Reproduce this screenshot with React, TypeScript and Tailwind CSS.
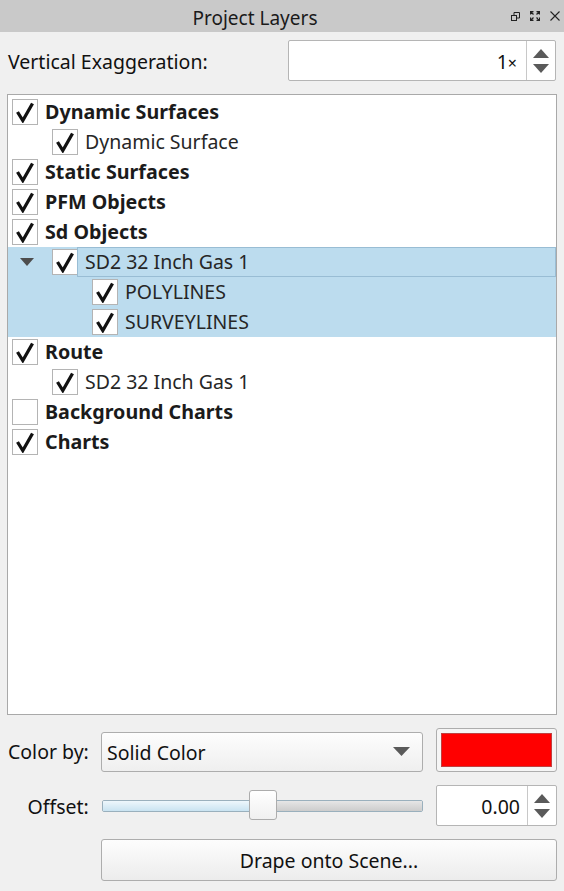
import React from "react";

type Layer = {
  label: string;
  level: number;
  bold?: boolean;
  checked: boolean;
  expander?: boolean;
  selected?: boolean;
  current?: boolean;
};

const layers: Layer[] = [
  { label: "Dynamic Surfaces", level: 0, bold: true, checked: true },
  { label: "Dynamic Surface", level: 1, checked: true },
  { label: "Static Surfaces", level: 0, bold: true, checked: true },
  { label: "PFM Objects", level: 0, bold: true, checked: true },
  { label: "Sd Objects", level: 0, bold: true, checked: true },
  { label: "SD2 32 Inch Gas 1", level: 1, checked: true, expander: true, selected: true, current: true },
  { label: "POLYLINES", level: 2, checked: true, selected: true },
  { label: "SURVEYLINES", level: 2, checked: true, selected: true },
  { label: "Route", level: 0, bold: true, checked: true },
  { label: "SD2 32 Inch Gas 1", level: 1, checked: true },
  { label: "Background Charts", level: 0, bold: true, checked: false },
  { label: "Charts", level: 0, bold: true, checked: true },
];

const font = { fontFamily: '"Noto Sans", "Open Sans", sans-serif' };

const Check = ({ checked }: { checked: boolean }) => (
  <div className="w-[26px] h-[26px] shrink-0 bg-white border border-[#b4b4b4] flex items-center justify-center">
    {checked && (
      <svg width="22" height="22" viewBox="0 0 22 22">
        <path d="M3.5 11 L8.8 19.5 L18.5 2.5" fill="none" stroke="#111" strokeWidth="3.3" strokeLinejoin="miter" />
      </svg>
    )}
  </div>
);

const SpinArrows = () => (
  <div className="w-[29px] h-full border-l border-[#c8c8c8] flex flex-col items-center justify-center gap-[6px]">
    <svg width="18" height="10" viewBox="0 0 18 10">
      <path d="M1 10 L9 1 L17 10 Z" fill="#5a5a5a" />
    </svg>
    <svg width="18" height="10" viewBox="0 0 18 10">
      <path d="M1 0 L9 9 L17 0 Z" fill="#5a5a5a" />
    </svg>
  </div>
);

const TitleIcons = () => (
  <div className="w-[54px] flex items-center gap-[10px] pl-[1px]">
    <svg width="9" height="9" viewBox="0 0 9 9">
      <rect x="0.5" y="3.5" width="5" height="5" fill="none" stroke="#222" />
      <path d="M3 3.5 V0.5 H8.5 V6 H5.5" fill="none" stroke="#222" />
    </svg>
    <svg width="10" height="10" viewBox="0 0 10 10">
      <path d="M0.5 3.5 V0.5 H3.5 M0.5 0.5 L3.5 3.5 M6.5 0.5 H9.5 V3.5 M9.5 0.5 L6.5 3.5 M0.5 6.5 V9.5 H3.5 M0.5 9.5 L3.5 6.5 M6.5 9.5 H9.5 V6.5 M9.5 9.5 L6.5 6.5" fill="none" stroke="#222" strokeWidth="1.3" />
    </svg>
    <svg width="10" height="10" viewBox="0 0 10 10">
      <path d="M0.5 0.5 L9.5 9.5 M9.5 0.5 L0.5 9.5" fill="none" stroke="#222" strokeWidth="1.1" />
    </svg>
  </div>
);

const LayerRow = ({ layer }: { layer: Layer }) => (
  <div className={`h-[30px] flex items-center ${layer.selected ? "bg-[#bcdcee]" : ""}`}>
    {layer.level === 0 && <div className="w-[4px] shrink-0" />}
    {layer.level === 1 && (
      <div className="w-[44px] shrink-0 flex items-center justify-center">
        {layer.expander && (
          <svg width="14" height="8" viewBox="0 0 14 8" className="mr-[6px]">
            <path d="M0 0 L14 0 L7 8 Z" fill="#4d4d4d" />
          </svg>
        )}
      </div>
    )}
    {layer.level === 2 && <div className="w-[84px] shrink-0" />}
    <Check checked={layer.checked} />
    <div
      className={`flex-1 h-full flex items-center pl-[7px] ${
        layer.current ? "border border-[#99bdd4] -ml-[1px] h-[29px]" : ""
      } ${layer.bold ? "font-bold text-[#1b1b1b]" : "text-[#262626]"}`}
    >
      <span className={`${layer.bold ? "text-[19.7px]" : "text-[19.5px]"} leading-none whitespace-nowrap`}>
        {layer.label}
      </span>
    </div>
  </div>
);

export default function App() {
  return (
    <div className="w-[564px] h-[891px] bg-[#f0f0f0] flex flex-col text-[#111]" style={font}>
      <div className="h-[32px] bg-[#c9c9c9] flex items-center">
        <div className="flex-1 text-center text-[19px] leading-none pt-[4px] text-[#1a1a1a]">Project Layers</div>
        <TitleIcons />
      </div>

      <div className="pt-[8px] pl-[8px] pr-[8px] flex items-center justify-between">
        <span className="text-[19.5px] pt-[2px]">Vertical Exaggeration:</span>
        <div className="w-[268px] h-[41px] bg-white border border-[#b5b5b5] rounded-[2px] flex items-center">
          <div className="flex-1 text-right pr-[9px] pt-[2px] text-[19.5px]">
            1<span className="text-[16px]">×</span>
          </div>
          <SpinArrows />
        </div>
      </div>

      <div className="mt-[13px] mx-[7px] h-[621px] bg-white border border-[#a9a9a9] pt-[2px]">
        {layers.map((l, i) => (
          <LayerRow key={i} layer={l} />
        ))}
      </div>

      <div className="mt-[13px] pl-[8px] pr-[7px] flex items-center h-[44px]">
        <span className="w-[93px] text-[19.5px] pt-[3px]">Color by:</span>
        <div className="w-[322px] h-[40px] mt-[4px] rounded-[3px] border border-[#adadad] bg-gradient-to-b from-[#fdfdfd] to-[#efefef] flex items-center pl-[5px] pr-[12px]">
          <span className="flex-1 text-[19.5px] pt-[1px]">Solid Color</span>
          <svg width="17" height="10" viewBox="0 0 17 10">
            <path d="M0 0 L17 0 L8.5 9 Z" fill="#5a5a5a" />
          </svg>
        </div>
        <div className="ml-[13px] w-[121px] h-[44px] rounded-[3px] border border-[#adadad] bg-[#f5f5f5] p-[4px]">
          <div className="w-full h-full bg-[#ff0000] border border-[#c04040]" />
        </div>
      </div>

      <div className="mt-[13px] pl-[8px] pr-[7px] flex items-center h-[41px]">
        <span className="w-[81px] text-right text-[19.5px] pt-[2px]">Offset:</span>
        <div className="ml-[13px] w-[322px] h-[32px] relative flex items-center">
          <div className="w-full h-[12px] flex rounded-[2px] overflow-hidden border border-[#9ab0bd]">
            <div className="w-[147px] h-full bg-gradient-to-b from-[#eef7fc] to-[#c9e3f1]" />
            <div className="flex-1 h-full bg-gradient-to-b from-[#e6e6e6] to-[#cccccc]" />
          </div>
          <div className="absolute left-[147px] top-[0px] w-[28px] h-[30px] rounded-[3px] border border-[#acacac] bg-gradient-to-b from-[#ffffff] to-[#f0f0f0]" />
        </div>
        <div className="ml-[13px] w-[121px] h-[41px] bg-white border border-[#b5b5b5] rounded-[2px] flex items-center">
          <div className="flex-1 text-right pr-[7px] pt-[2px] text-[19.5px]">0.00</div>
          <SpinArrows />
        </div>
      </div>

      <div className="mt-[13px] ml-[101px] mr-[7px] h-[42px] pt-[2px] rounded-[3px] border border-[#adadad] bg-gradient-to-b from-[#fdfdfd] to-[#ececec] flex items-center justify-center text-[19.5px]">
        Drape onto Scene...
      </div>
    </div>
  );
}
